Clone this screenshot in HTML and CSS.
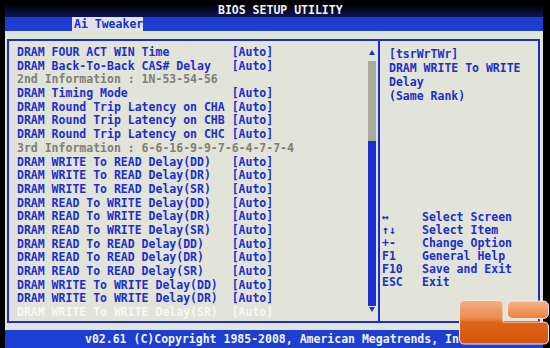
FILE: index.html
```html
<!DOCTYPE html>
<html lang="en">
  <head>
    <meta charset="UTF-8" />
    <meta name="viewport" content="width=device-width, initial-scale=1.0" />
    <title>BIOS Setup Utility</title>
    <link rel="stylesheet" href="styles.css">
  </head>
  <body>
    <div class="screen">
      <div class="title-bar">BIOS SETUP UTILITY</div>
      <div class="tab-bar">
        <div class="tab">Ai Tweaker</div>
      </div>

      <div class="main">
        <div class="frame">
          <div class="left-pane">
            <div class="items">
              <div class="row"><span>DRAM FOUR ACT WIN Time</span><span>[Auto]</span></div>
              <div class="row"><span>DRAM Back-To-Back CAS# Delay</span><span>[Auto]</span></div>
              <div class="row info">2nd Information : 1N-53-54-56</div>
              <div class="row"><span>DRAM Timing Mode</span><span>[Auto]</span></div>
              <div class="row"><span>DRAM Round Trip Latency on CHA</span><span>[Auto]</span></div>
              <div class="row"><span>DRAM Round Trip Latency on CHB</span><span>[Auto]</span></div>
              <div class="row"><span>DRAM Round Trip Latency on CHC</span><span>[Auto]</span></div>
              <div class="row info">3rd Information : 6-6-16-9-9-7-6-4-7-7-4</div>
              <div class="row"><span>DRAM WRITE To READ Delay(DD)</span><span>[Auto]</span></div>
              <div class="row"><span>DRAM WRITE To READ Delay(DR)</span><span>[Auto]</span></div>
              <div class="row"><span>DRAM WRITE To READ Delay(SR)</span><span>[Auto]</span></div>
              <div class="row"><span>DRAM READ To WRITE Delay(DD)</span><span>[Auto]</span></div>
              <div class="row"><span>DRAM READ To WRITE Delay(DR)</span><span>[Auto]</span></div>
              <div class="row"><span>DRAM READ To WRITE Delay(SR)</span><span>[Auto]</span></div>
              <div class="row"><span>DRAM READ To READ Delay(DD)</span><span>[Auto]</span></div>
              <div class="row"><span>DRAM READ To READ Delay(DR)</span><span>[Auto]</span></div>
              <div class="row"><span>DRAM READ To READ Delay(SR)</span><span>[Auto]</span></div>
              <div class="row"><span>DRAM WRITE To WRITE Delay(DD)</span><span>[Auto]</span></div>
              <div class="row"><span>DRAM WRITE To WRITE Delay(DR)</span><span>[Auto]</span></div>
              <div class="row selected"><span>DRAM WRITE To WRITE Delay(SR)</span><span>[Auto]</span></div>
            </div>
            <div class="scrollbar">
              <div class="arrow up"></div>
              <div class="track">
                <div class="track-empty"></div>
                <div class="thumb"></div>
              </div>
              <div class="arrow down"></div>
            </div>
          </div>

          <div class="right-pane">
            <div class="help">
              <div>[tsrWrTWr]</div>
              <div>DRAM WRITE To WRITE</div>
              <div>Delay</div>
              <div>(Same Rank)</div>
            </div>
            <div class="keys">
              <span>↔</span><span>Select Screen</span>
              <span>↑↓</span><span>Select Item</span>
              <span>+-</span><span>Change Option</span>
              <span>F1</span><span>General Help</span>
              <span>F10</span><span>Save and Exit</span>
              <span>ESC</span><span>Exit</span>
            </div>
          </div>
        </div>
      </div>

      <div class="footer">v02.61 (C)Copyright 1985-2008, American Megatrends, Inc.</div>
    </div>

    <svg class="logo" width="91" height="48" viewBox="0 0 91 48">
      <defs>
        <linearGradient id="gloss" x1="0" y1="0" x2="0" y2="1">
          <stop offset="0" stop-color="#f4b088" />
          <stop offset="0.42" stop-color="#e98a4c" />
          <stop offset="0.5" stop-color="#de6518" />
          <stop offset="1" stop-color="#d45608" />
        </linearGradient>
        <linearGradient id="gloss-small" x1="0" y1="0" x2="0" y2="1">
          <stop offset="0" stop-color="#f6b590" />
          <stop offset="1" stop-color="#ea8236" />
        </linearGradient>
      </defs>
      <path d="M5.5 0.5 H39 Q44 0.5 44 5.5 V22 H84.5 Q89.5 22 89.5 27 V39 Q89.5 44 84.5 44 H5.5 Q0.5 44 0.5 39 V5.5 Q0.5 0.5 5.5 0.5 Z" fill="url(#gloss)" stroke="#f6e8dc" stroke-width="1" />
      <rect x="48.5" y="1" width="41" height="17.5" rx="5" fill="url(#gloss-small)" stroke="#f6e8dc" stroke-width="1" />
    </svg>
  </body>
</html>
```

FILE: styles.css
```css
:root {
  --blue: #1d3ed2;
  --text-blue: #1a2fce;
  --panel: #e2e3d9;
  --grey-text: #7f7f76;
  --line: 13.7px;
}

* {
  margin: 0;
  padding: 0;
  box-sizing: border-box;
}

body {
  background: #000;
  width: 550px;
  height: 348px;
  overflow: hidden;
  position: relative;
  font-family: "DejaVu Sans Mono", "Liberation Mono", monospace;
  font-size: 11.5px;
  font-weight: bold;
}

.screen {
  width: 538px;
  margin-left: 5px;
}

.title-bar {
  height: 17px;
  padding-left: 213px;
  line-height: 20px;
  color: #f2f2f6;
  background: linear-gradient(#000 0, #000 4px, #0c1456 100%);
}

.tab-bar {
  height: 14px;
  background: var(--blue);
}

.tab {
  width: 71px;
  height: 14px;
  margin-left: 67px;
  padding-left: 2px;
  line-height: 14px;
  background: #dfe2e6;
  color: var(--text-blue);
  white-space: nowrap;
}

.main {
  height: 299px;
  padding: 8px 3px 7px 2px;
  background: var(--panel);
}

.frame {
  display: flex;
  height: 100%;
  border: 2px solid var(--text-blue);
}

.left-pane {
  display: flex;
  width: 371px;
  padding: 5px 2px 0 8px;
  border-right: 2px solid var(--text-blue);
}

.items {
  flex: 1;
}

.row {
  display: grid;
  grid-template-columns: 31ch auto;
  height: var(--line);
  line-height: var(--line);
  color: var(--text-blue);
  white-space: pre;
}

.row.info {
  display: block;
  color: var(--grey-text);
}

.row.selected {
  color: #f8f8f2;
}

.scrollbar {
  width: 8px;
  display: flex;
  flex-direction: column;
  align-items: center;
  padding-top: 4px;
}

.arrow {
  width: 0;
  height: 0;
  border-left: 3px solid transparent;
  border-right: 3px solid transparent;
}

.arrow.up {
  border-bottom: 5px solid var(--text-blue);
  margin-bottom: 6px;
}

.arrow.down {
  border-top: 5px solid var(--text-blue);
  margin-top: 1px;
}

.track {
  width: 8px;
  height: 245px;
  display: flex;
  flex-direction: column;
}

.track-empty {
  height: 80px;
  background: #a7aa9f;
}

.thumb {
  flex: 1;
  background: var(--text-blue);
}

.right-pane {
  flex: 1;
  display: flex;
  flex-direction: column;
  padding: 6px 0 32px 9px;
  color: var(--text-blue);
}

.help {
  line-height: 14px;
}

.keys {
  margin-top: auto;
  margin-left: -7px;
  display: grid;
  grid-template-columns: 40px auto;
  line-height: 13px;
}

.footer {
  height: 18px;
  padding-left: 80px;
  line-height: 18px;
  background: var(--blue);
  color: #f2f2f6;
  white-space: pre;
}

/* watermark over the bottom-right corner */
.logo {
  position: absolute;
  left: 459px;
  top: 300px;
}
```
